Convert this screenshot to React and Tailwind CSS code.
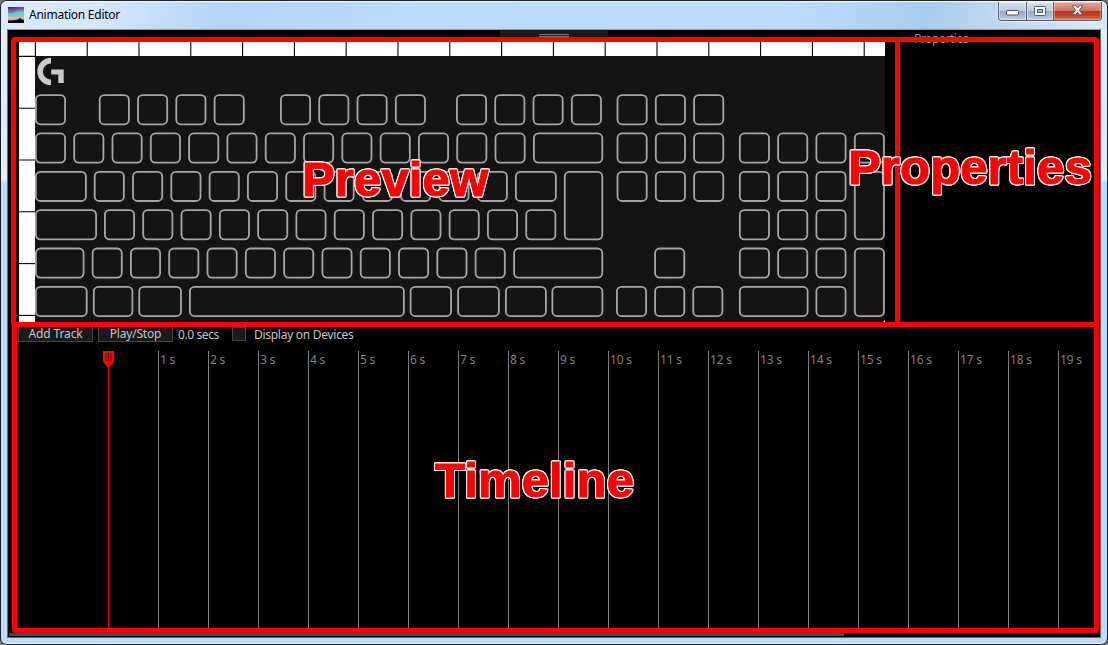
import React from "react";

const PITCH = 38.3;
const ROW_TOP = 94.2;

// Each row lists [x, width, rows spanned]; omitted width is a single key.
const run = (x, count) => Array.from({ length: count }, (_, i) => [x + i * PITCH]);

const keyRows = [
  [[35], ...run(98.8, 4), ...run(280, 4), ...run(456, 4), ...run(616.6, 3)],
  [...run(35, 13), [533, 70.2], ...run(616.6, 3), ...run(738.9, 3), [853.9]],
  [[35, 51.8], ...run(93.8, 11), [515, 41.8], [563.9, 39.3, 2], ...run(616.6, 3), ...run(738.9, 3), [853.9, 31, 2]],
  [[35, 62], ...run(104, 12), ...run(738.9, 3)],
  [[35, 49.5], ...run(91.7, 11), [513.2, 90], [654.2], ...run(738.9, 3), [853.9, 31, 2]],
  [
    [35, 52.6], [92.9, 40.4], [138.3, 43.6], [189, 215.8], [409.7, 42.3], [457.2, 42.6],
    [505, 41.8], [551.5, 51.8], [616], [654.2], [692.3], [738.9, 69.6], [815.5],
  ],
];

function Keyboard() {
  return (
    <svg className="block h-[266px] w-[850px] rounded-br-[3px] bg-[#141414]" viewBox="35 56 850 266">
      <path d="M51 57.8 A13.7 13.7 0 0 0 51 85.2 V79.6 A8.1 8.1 0 0 1 51 63.4 Z M51.2 69.6 H63.7 V83 H58.3 V74.4 H51.2 Z" fill="#cbcbcb" />
      <g fill="none" stroke="#a6a6a6" strokeWidth="1.8">
        {keyRows.map((row, r) =>
          row.map(([x, w = 31, span = 1]) => (
            <rect
              key={`${r}-${x}`}
              x={x + 0.9}
              y={ROW_TOP + r * 38.35 + 0.9}
              width={w - 1.8}
              height={31 + (span - 1) * 38.35 - 1.8}
              rx="4.6"
            />
          ))
        )}
      </g>
    </svg>
  );
}

function Rulers() {
  return (
    <svg className="absolute left-0 top-0 h-[281px] w-[866px]" viewBox="19 41 866 281">
      <path d="M19 41.5H885" stroke="#808080" />
      <g stroke="#000" strokeWidth="1.1">
        {Array.from({ length: 17 }, (_, i) => (
          <path key={i} d={`M${35.4 + i * 51.8} 42V56`} />
        ))}
        {Array.from({ length: 6 }, (_, i) => (
          <path key={i} d={`M19 ${56.4 + i * 51.8}H35`} />
        ))}
      </g>
    </svg>
  );
}

function AppIcon() {
  return (
    <svg className="h-4 w-4" viewBox="0 0 16 16">
      <defs>
        <linearGradient id="aurora" x1="0" y1="0" x2="0.15" y2="1">
          <stop offset="0" stopColor="#35265a" />
          <stop offset=".25" stopColor="#7b55a5" />
          <stop offset=".42" stopColor="#55c9c4" />
          <stop offset=".6" stopColor="#6fd0c8" />
          <stop offset=".75" stopColor="#d5b7ba" />
          <stop offset="1" stopColor="#5c4350" />
        </linearGradient>
      </defs>
      <path d="M0 0H16V16H0Z" fill="url(#aurora)" />
      <path d="M0 5Q3 7 7 4.5T16 4V2Q11 1 7 3T0 2Z" fill="#8a5fb5" opacity=".8" />
      <path d="M0 9Q4 10 8 9.5T16 11V13L0 12Z" fill="#d8b9c0" opacity=".8" />
      <path d="M0 13.5L4 13.5L8 13L11 12L12 10.5L13 12L16 13V16H0Z" fill="#0a0809" />
    </svg>
  );
}

function WindowButtons() {
  return (
    <div className="mr-[5px] flex h-[19px] w-[104px] overflow-hidden rounded-b-[4px] border border-t-0 border-[#4d5866] shadow-[0_0_1px_1px_rgba(255,255,255,0.6)]">
      <div className="flex w-[28px] items-center justify-center border-r border-[#4d5866] bg-[linear-gradient(#d6e0ec_0%,#bccada_48%,#98a9be_50%,#b9cce2_100%)] shadow-[inset_0_0_0_1px_rgba(255,255,255,0.5)]">
        <svg className="mt-[4px] h-[6px] w-[13px]" viewBox="0 0 13 6">
          <rect x=".5" y=".5" width="12" height="4.5" rx="1" fill="#fff" stroke="#535666" />
        </svg>
      </div>
      <div className="flex w-[27px] items-center justify-center border-r border-[#4d5866] bg-[linear-gradient(#d6e0ec_0%,#bccada_48%,#98a9be_50%,#b9cce2_100%)] shadow-[inset_0_0_0_1px_rgba(255,255,255,0.5)]">
        <svg className="-mt-px h-[10px] w-[12px]" viewBox="0 0 12 10">
          <rect x=".5" y=".5" width="11" height="9" rx="1" fill="#fff" stroke="#535666" />
          <rect x="3.5" y="3.5" width="5" height="3" fill="#a8bbd0" stroke="#535666" />
        </svg>
      </div>
      <div className="flex flex-1 items-center justify-center bg-[linear-gradient(#e2a799_0%,#cf7565_47%,#b93420_50%,#bd4029_75%,#d77c5c_100%)] shadow-[inset_0_0_0_1px_rgba(255,255,255,0.35)]">
        <svg className="-mt-px h-[11px] w-[13px]" viewBox="0 0 13 11">
          <path
            d="M1.2 .7H4.7L6.5 3L8.3 .7H11.8L8.4 5.2L11.8 9.8H8.3L6.5 7.4L4.7 9.8H1.2L4.6 5.2Z"
            fill="#fff"
            stroke="#535666"
            strokeLinejoin="round"
          />
        </svg>
      </div>
    </div>
  );
}

function TitleBar() {
  return (
    <header className="flex h-[29px] justify-between pl-[7px]">
      <div className="flex h-[26px] items-center gap-[5px] pb-px">
        <AppIcon />
        <span className="text-[12px] tracking-[-0.25px] text-black">Animation Editor</span>
      </div>
      <WindowButtons />
    </header>
  );
}

function PreviewPanel() {
  return (
    <section className="relative ml-[11px] mt-[10px] h-[281px] w-[866px] bg-white pl-4 pt-[15px]">
      <Keyboard />
      <Rulers />
    </section>
  );
}

function PropertiesPanel() {
  return (
    <section className="flex-1 pl-[29px]">
      <h2 className="text-[12px] leading-[16px] tracking-[-0.4px] text-[#9a9a9a]">Properties</h2>
    </section>
  );
}

function Toolbar() {
  return (
    <div className="flex h-[19px] items-start pl-[10px] text-[12px] leading-[15px] tracking-[-0.28px] text-[#c4c4c4]">
      <button className="h-[19px] w-[75px] border border-[#444] bg-[#1a1a1a] pt-[2px] leading-[15px] tracking-[-0.12px]">Add Track</button>
      <button className="ml-[5px] h-[19px] w-[75px] border border-[#444] bg-[#1a1a1a] pt-[2px] leading-[15px] tracking-[-0.2px]">Play/Stop</button>
      <span className="ml-[5px] w-[54px] pt-[4px] tracking-[-0.4px]">0.0 secs</span>
      <span className="mt-[4px] h-[14px] w-[14px] border border-[#444] bg-[#1a1a1a]" />
      <span className="ml-[8px] pt-[4px]">Display on Devices</span>
    </div>
  );
}

function Timeline() {
  return (
    <div className="relative mt-[9px] flex h-[279px] pl-[100px]">
      {Array.from({ length: 20 }, (_, i) => (
        <div
          key={i}
          className={`h-full w-[50px] shrink-0 border-l pl-px text-[12px] leading-[17px] tracking-[-0.2px] text-[#808080] last:w-[42px] ${
            i === 0 ? "border-[#f00000]" : "border-[#808080]"
          }`}
        >
          {i > 0 && `${i} s`}
        </div>
      ))}
      <svg className="absolute left-[95px] top-0 h-[17px] w-[11px]" viewBox="0 0 11 17">
        <path d="M0 0H11V11L5.5 17L0 11Z" fill="#f00" />
        <path d="M3 2V10M5.5 2V10M8 2V10" stroke="#8c0000" strokeWidth="1.4" />
      </svg>
    </div>
  );
}

const captionClass =
  "absolute whitespace-nowrap font-['Liberation_Sans',Arial,sans-serif] text-[49px] font-bold leading-[54px] tracking-[0.15px] text-[#ff0000] [-webkit-text-stroke:1px_#ff0000] [filter:drop-shadow(1px_0_0_#f4f4f4)_drop-shadow(-1px_0_0_#f4f4f4)_drop-shadow(0_1px_0_#f4f4f4)_drop-shadow(0_-1px_0_#f4f4f4)]";

function Annotations() {
  return (
    <div className="pointer-events-none absolute inset-0">
      <div className="absolute left-[11px] top-[37px] h-[290px] w-[889px] rounded-[4px] border-[5px] border-[#ff0000]" />
      <div className="absolute left-[895px] top-[37px] h-[290px] w-[204px] rounded-[4px] border-[5px] border-[#ff0000]" />
      <div className="absolute left-[12px] top-[322px] h-[311px] w-[1087px] rounded-[4px] border-[5px] border-[#ff0000]" />
      <span className={`${captionClass} left-[302px] top-[152px]`}>Preview</span>
      <span className={`${captionClass} left-[848px] top-[140px]`}>Properties</span>
      <span className={`${captionClass} left-[435px] top-[453px]`}>Timeline</span>
    </div>
  );
}

export default function App() {
  return (
    <div className="relative h-[645px] w-[1108px] overflow-hidden bg-[#777] font-['Noto_Sans',sans-serif]">
      <div className="relative h-full w-full overflow-hidden rounded-[7px] border border-[#1d232b] bg-[linear-gradient(#e6f0fb_0px,#dbeafa_120px,#e6effa_178px,#b9dbfc_182px,#bcdcfc_100%)]">
        <div className="h-full rounded-[6px] border-b border-t border-white/70 bg-[linear-gradient(100deg,#dcebfa_0px,#d2e6fb_110px,#b3d4f4_220px,#bddcfc_420px,#bcdcfc_780px,#a9cdec_915px,#c6dcf1_1010px,#dce9f6_1100px)] bg-[length:100%_28px] bg-no-repeat">
          <TitleBar />
          <main className="-mt-[2px] ml-[6px] flex h-[609px] w-[1094px] flex-col overflow-hidden border border-[#5b6c7e] border-t-[#8799ab] bg-black">
            <div className="flex h-[293px] shrink-0 pt-px">
              <PreviewPanel />
              <PropertiesPanel />
            </div>
            <div className="shrink-0">
              <Toolbar />
              <Timeline />
            </div>
            <div className="ml-px mt-[3px] h-[3px] w-[835px] shrink-0 bg-[#4a4a4a]" />
          </main>
        </div>
      </div>
      <div className="absolute left-[500px] top-[30px] flex h-[10px] w-[108px] flex-col items-center gap-px bg-[#1a1a1a] pt-[4px]">
        <i className="h-px w-[30px] bg-[#777]" />
        <i className="h-px w-[30px] bg-[#777]" />
      </div>
      <Annotations />
    </div>
  );
}
